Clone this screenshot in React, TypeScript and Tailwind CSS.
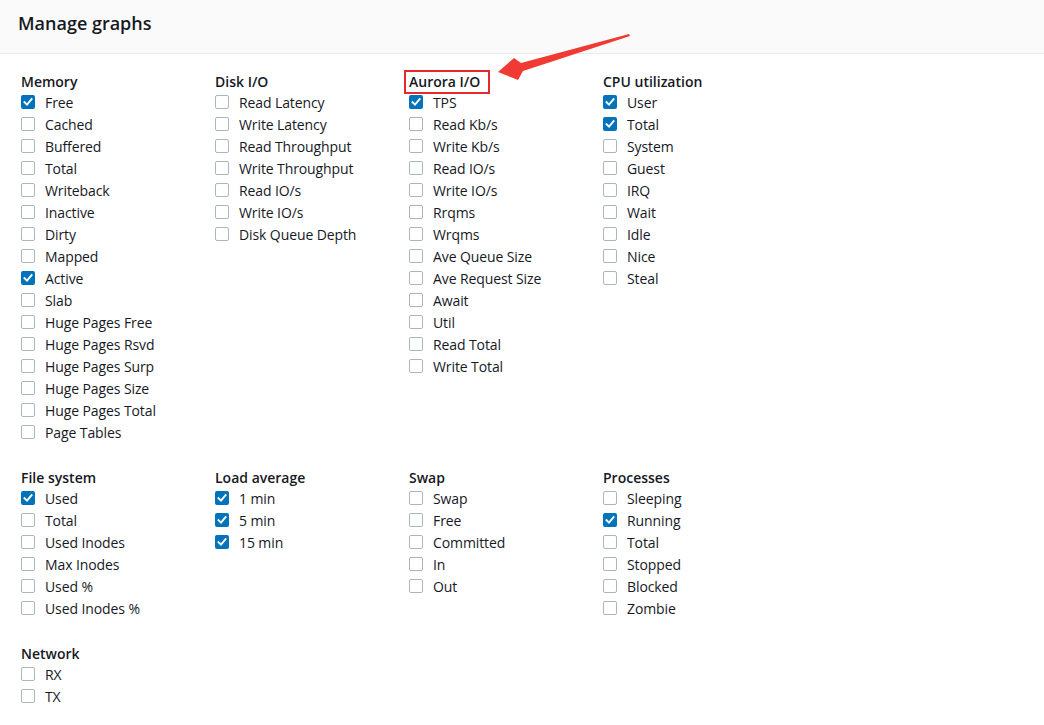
import React from "react";

type Item = { label: string; checked?: boolean };
type Group = { title: string; items: Item[]; highlight?: boolean };

const items = (labels: string[], checked: string[] = []): Item[] =>
  labels.map((label) => ({ label, checked: checked.includes(label) }));

const ROWS: Group[][] = [
  [
    {
      title: "Memory",
      items: items(
        [
          "Free",
          "Cached",
          "Buffered",
          "Total",
          "Writeback",
          "Inactive",
          "Dirty",
          "Mapped",
          "Active",
          "Slab",
          "Huge Pages Free",
          "Huge Pages Rsvd",
          "Huge Pages Surp",
          "Huge Pages Size",
          "Huge Pages Total",
          "Page Tables",
        ],
        ["Free", "Active"]
      ),
    },
    {
      title: "Disk I/O",
      items: items([
        "Read Latency",
        "Write Latency",
        "Read Throughput",
        "Write Throughput",
        "Read IO/s",
        "Write IO/s",
        "Disk Queue Depth",
      ]),
    },
    {
      title: "Aurora I/O",
      highlight: true,
      items: items(
        [
          "TPS",
          "Read Kb/s",
          "Write Kb/s",
          "Read IO/s",
          "Write IO/s",
          "Rrqms",
          "Wrqms",
          "Ave Queue Size",
          "Ave Request Size",
          "Await",
          "Util",
          "Read Total",
          "Write Total",
        ],
        ["TPS"]
      ),
    },
    {
      title: "CPU utilization",
      items: items(
        ["User", "Total", "System", "Guest", "IRQ", "Wait", "Idle", "Nice", "Steal"],
        ["User", "Total"]
      ),
    },
  ],
  [
    {
      title: "File system",
      items: items(
        ["Used", "Total", "Used Inodes", "Max Inodes", "Used %", "Used Inodes %"],
        ["Used"]
      ),
    },
    {
      title: "Load average",
      items: items(["1 min", "5 min", "15 min"], ["1 min", "5 min", "15 min"]),
    },
    {
      title: "Swap",
      items: items(["Swap", "Free", "Committed", "In", "Out"]),
    },
    {
      title: "Processes",
      items: items(
        ["Sleeping", "Running", "Total", "Stopped", "Blocked", "Zombie"],
        ["Running"]
      ),
    },
  ],
  [
    {
      title: "Network",
      items: items(["RX", "TX"]),
    },
  ],
];

function Checkbox({ checked }: { checked?: boolean }) {
  if (checked) {
    return (
      <span className="flex h-[14px] w-[14px] shrink-0 items-center justify-center rounded-[2px] bg-[#0073bb]">
        <svg width="10" height="10" viewBox="0 0 10 10" fill="none">
          <path d="M1.5 5.2 L4 7.6 L8.6 2.2" stroke="white" strokeWidth="1.9" strokeLinecap="square" />
        </svg>
      </span>
    );
  }
  return <span className="h-[14px] w-[14px] shrink-0 rounded-[2px] border border-[#aab7b8] bg-white" />;
}

function GroupColumn({ group }: { group: Group }) {
  return (
    <div className="flex flex-col">
      <div className="relative h-[19px] text-[14px] font-semibold leading-[20px] text-[#16191f]">
        {group.title}
        {group.highlight && (
          <span className="absolute -left-[5px] -top-[2px] h-[24px] w-[86px] border-2 border-[#e8292b]" />
        )}
      </div>
      {group.items.map((item) => (
        <label
          key={item.label}
          className="flex h-[22px] items-center gap-[10px] text-[14px] tracking-[-0.1px] text-[#16191f]"
        >
          <Checkbox checked={item.checked} />
          <span>{item.label}</span>
        </label>
      ))}
    </div>
  );
}

export default function App() {
  return (
    <div
      className="relative min-h-[725px] w-[1044px] bg-white"
      style={{ fontFamily: '"Open Sans", "Noto Sans", sans-serif' }}
    >
      <div className="h-[54px] border-b border-[#eaeded] bg-[#fafafa] px-[18px] pt-[11px]">
        <h1 className="text-[18px] font-semibold leading-[24px] text-[#16191f]">Manage graphs</h1>
      </div>

      <div className="flex flex-col gap-[25px] pl-[21px] pt-[18px]">
        {ROWS.map((row, i) => (
          <div key={i} className="grid grid-cols-[194px_194px_194px_194px]">
            {row.map((group) => (
              <GroupColumn key={group.title} group={group} />
            ))}
          </div>
        ))}
      </div>

      <svg className="pointer-events-none absolute left-0 top-0" width="1044" height="120">
        <polygon points="629,34 521,63 514,58 498,72 518,80 523,71 630,36" fill="#f03a34" />
      </svg>
    </div>
  );
}
